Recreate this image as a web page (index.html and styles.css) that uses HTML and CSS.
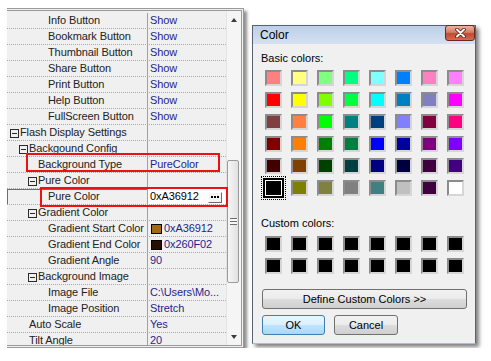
FILE: index.html
```html
<!DOCTYPE html>
<html lang="en">
<head>
  <meta charset="UTF-8">
  <meta name="viewport" content="width=device-width, initial-scale=1.0">
  <title>Flash Display Settings - Color</title>
  <link rel="stylesheet" href="styles.css">
</head>
<body>
  <div class="desk">
    <div class="grid-panel">
      <div class="rows">
        <div class="row"><div class="name l3">Info Button</div><div class="value">Show</div></div>
        <div class="row"><div class="name l3">Bookmark Button</div><div class="value">Show</div></div>
        <div class="row"><div class="name l3">Thumbnail Button</div><div class="value">Show</div></div>
        <div class="row"><div class="name l3">Share Button</div><div class="value">Show</div></div>
        <div class="row"><div class="name l3">Print Button</div><div class="value">Show</div></div>
        <div class="row"><div class="name l3">Help Button</div><div class="value">Show</div></div>
        <div class="row"><div class="name l3">FullScreen Button</div><div class="value">Show</div></div>
        <div class="row"><div class="name c0"><i class="toggle"></i>Flash Display Settings</div><div class="value"></div></div>
        <div class="row"><div class="name c1"><i class="toggle"></i>Backgound Config</div><div class="value"></div></div>
        <div class="row">
          <div class="name l2">Background Type</div><div class="value">PureColor</div>
          <span class="mark mark-type"></span>
        </div>
        <div class="row"><div class="name c2"><i class="toggle"></i>Pure Color</div><div class="value"></div></div>
        <div class="row sel">
          <div class="name l3">Pure Color</div>
          <div class="value">0xA36912
            <span class="dots"><svg width="8" height="2" viewBox="0 0 8 2"><rect x="0" width="2" height="2"/><rect x="3" width="2" height="2"/><rect x="6" width="2" height="2"/></svg></span>
          </div>
          <span class="mark mark-color"></span>
        </div>
        <div class="row"><div class="name c2"><i class="toggle"></i>Gradient Color</div><div class="value"></div></div>
        <div class="row"><div class="name l3">Gradient Start Color</div><div class="value"><span class="chip" style="background:#a36912"></span>0xA36912</div></div>
        <div class="row"><div class="name l3">Gradient End Color</div><div class="value"><span class="chip" style="background:#260f02"></span>0x260F02</div></div>
        <div class="row"><div class="name l3">Gradient Angle</div><div class="value">90</div></div>
        <div class="row"><div class="name c2"><i class="toggle"></i>Background Image</div><div class="value"></div></div>
        <div class="row"><div class="name l3">Image File</div><div class="value">C:\Users\Mo...</div></div>
        <div class="row"><div class="name l3">Image Position</div><div class="value">Stretch</div></div>
        <div class="row"><div class="name l1">Auto Scale</div><div class="value">Yes</div></div>
        <div class="row"><div class="name l1">Tilt Angle</div><div class="value">20</div></div>
      </div>
      <div class="scrollbar">
        <div class="arrow up"></div>
        <div class="thumb"><span class="grip"></span></div>
        <div class="arrow down"></div>
      </div>
    </div>

    <div class="dialog">
      <div class="titlebar">
        <span class="title">Color</span>
        <button class="close">
          <svg width="13" height="10" viewBox="0 0 13 10">
            <path d="M3 1.5L10 8.5M10 1.5L3 8.5" stroke="#5a1d12" stroke-width="3.6" stroke-linecap="round"/>
            <path d="M3 1.5L10 8.5M10 1.5L3 8.5" stroke="#fff" stroke-width="2" stroke-linecap="round"/>
          </svg>
        </button>
      </div>
      <div class="dlg-body">
        <div class="label">Basic colors:</div>
        <div class="swatches">
          <span class="sw" style="background:#ff8080"></span>
          <span class="sw" style="background:#ffff80"></span>
          <span class="sw" style="background:#80ff80"></span>
          <span class="sw" style="background:#00ff80"></span>
          <span class="sw" style="background:#80ffff"></span>
          <span class="sw" style="background:#0080ff"></span>
          <span class="sw" style="background:#ff80c0"></span>
          <span class="sw" style="background:#ff80ff"></span>

          <span class="sw" style="background:#ff0000"></span>
          <span class="sw" style="background:#ffff00"></span>
          <span class="sw" style="background:#80ff00"></span>
          <span class="sw" style="background:#00ff40"></span>
          <span class="sw" style="background:#00ffff"></span>
          <span class="sw" style="background:#0080c0"></span>
          <span class="sw" style="background:#8080c0"></span>
          <span class="sw" style="background:#ff00ff"></span>

          <span class="sw" style="background:#804040"></span>
          <span class="sw" style="background:#ff8040"></span>
          <span class="sw" style="background:#00ff00"></span>
          <span class="sw" style="background:#008080"></span>
          <span class="sw" style="background:#004080"></span>
          <span class="sw" style="background:#8080ff"></span>
          <span class="sw" style="background:#800040"></span>
          <span class="sw" style="background:#ff0080"></span>

          <span class="sw" style="background:#800000"></span>
          <span class="sw" style="background:#ff8000"></span>
          <span class="sw" style="background:#008000"></span>
          <span class="sw" style="background:#008040"></span>
          <span class="sw" style="background:#0000ff"></span>
          <span class="sw" style="background:#0000a0"></span>
          <span class="sw" style="background:#800080"></span>
          <span class="sw" style="background:#8000ff"></span>

          <span class="sw" style="background:#400000"></span>
          <span class="sw" style="background:#804000"></span>
          <span class="sw" style="background:#004000"></span>
          <span class="sw" style="background:#004040"></span>
          <span class="sw" style="background:#000080"></span>
          <span class="sw" style="background:#000040"></span>
          <span class="sw" style="background:#400040"></span>
          <span class="sw" style="background:#400080"></span>

          <span class="sw picked" style="background:#000000"></span>
          <span class="sw" style="background:#808000"></span>
          <span class="sw" style="background:#808040"></span>
          <span class="sw" style="background:#808080"></span>
          <span class="sw" style="background:#408080"></span>
          <span class="sw" style="background:#c0c0c0"></span>
          <span class="sw" style="background:#400040"></span>
          <span class="sw" style="background:#ffffff"></span>
        </div>

        <div class="label custom-label">Custom colors:</div>
        <div class="swatches custom">
          <span class="sw"></span><span class="sw"></span><span class="sw"></span><span class="sw"></span>
          <span class="sw"></span><span class="sw"></span><span class="sw"></span><span class="sw"></span>
          <span class="sw"></span><span class="sw"></span><span class="sw"></span><span class="sw"></span>
          <span class="sw"></span><span class="sw"></span><span class="sw"></span><span class="sw"></span>
        </div>

        <button class="btn btn-define">Define Custom Colors &gt;&gt;</button>
        <div class="btn-row">
          <button class="btn btn-ok">OK</button>
          <button class="btn btn-cancel">Cancel</button>
        </div>
      </div>
    </div>
  </div>
</body>
</html>
```

FILE: styles.css
```css
* {
  box-sizing: border-box;
}
body {
  margin: 0;
  background: #fff;
  font-family: "Liberation Sans", Arial, sans-serif;
  font-size: 11px;
  color: #222;
}
.desk {
  display: flex;
  align-items: flex-start;
  padding: 8px 0 0 7px;
}

/* property grid */
.grid-panel {
  display: flex;
  width: 237px;
  height: 340px;
  background: #f0f0f0;
  border-top: 3px double #9a9a9a;
  border-right: 3px double #9a9a9a;
  border-bottom: 3px double #9a9a9a;
  box-shadow: 3px 3px 3px rgba(0, 0, 0, 0.45);
  overflow: hidden;
}
.rows {
  width: 219px;
  flex: none;
  padding-top: 2px;
  letter-spacing: -0.1px;
}
.row {
  position: relative;
  display: flex;
  height: 16px;
  line-height: 15px;
  border-bottom: 1px dotted #a9a9a9;
}
.name {
  width: 140px;
  flex: none;
  display: flex;
  align-items: center;
  white-space: nowrap;
  overflow: hidden;
}
.value {
  flex: 1;
  display: flex;
  align-items: center;
  padding-left: 2px;
  border-left: 1px solid #a0a0a0;
  color: #1f1f8c;
  white-space: nowrap;
  overflow: hidden;
}
.l1 { padding-left: 22px; }
.l2 { padding-left: 31px; }
.l3 { padding-left: 41px; }
.c0 { padding-left: 3px; }
.c1 { padding-left: 12px; }
.c2 { padding-left: 21px; }
.toggle {
  width: 9px;
  height: 9px;
  margin: 2px 1px 0 0;
  border: 1px solid #2a2a2a;
  background: linear-gradient(#2a2a2a, #2a2a2a) center / 5px 1px no-repeat;
}
.row.sel .name {
  box-shadow: inset 1px 1px 0 #6e6e6e;
}
.row.sel .value {
  background: #fff;
  color: #000;
}
.dots {
  display: flex;
  align-items: center;
  justify-content: center;
  width: 14px;
  height: 11px;
  margin: 1px 4px 0 auto;
  background: #f4f4f4;
  border: 1px solid;
  border-color: #fff #6a6a6a #6a6a6a #fff;
}
.chip {
  width: 11px;
  height: 10px;
  margin: 1px 2px 0 1px;
  border: 1px solid #000;
}
.mark {
  position: absolute;
  z-index: 2;
  border: 2px solid #ee1111;
}
.mark-type {
  left: 19px;
  top: -4px;
  width: 194px;
  height: 19px;
}
.mark-color {
  left: 33px;
  top: -2px;
  width: 188px;
  height: 20px;
}

.scrollbar {
  position: relative;
  z-index: 1;
  width: 15px;
  flex: none;
  display: flex;
  flex-direction: column;
  background: #f5f5f5;
  border-left: 1px solid #e4e4e4;
}
.arrow {
  height: 17px;
  display: flex;
  align-items: center;
  justify-content: center;
}
.arrow::before {
  content: "";
  border-left: 3px solid transparent;
  border-right: 3px solid transparent;
}
.arrow.up::before {
  border-bottom: 4px solid #3a3a3a;
}
.arrow.down {
  margin-top: auto;
}
.arrow.down::before {
  border-top: 4px solid #3a3a3a;
}
.thumb {
  width: 12px;
  height: 123px;
  margin-top: 132px;
  display: flex;
  align-items: center;
  justify-content: center;
  border: 1px solid #9b9b9b;
  border-radius: 2px;
  background: linear-gradient(to right, #f6f6f6, #e1e1e1);
}
.grip {
  width: 7px;
  height: 7px;
  background: repeating-linear-gradient(#6c6c6c 0 1px, #f7f7f7 1px 3px);
}

/* color dialog */
.dialog {
  width: 224px;
  margin: 17px 0 0 8px;
  background: #f0f0f0;
  border: 1px solid #59626e;
  border-bottom-color: #8ccbea;
  box-shadow: 3px 3px 4px rgba(0, 0, 0, 0.5);
}
.titlebar {
  display: flex;
  height: 18px;
  background: linear-gradient(#bccfe8, #d4e1f1);
}
.title {
  padding: 2px 0 0 7px;
  font-size: 12px;
  line-height: 14px;
  color: #000;
}
.close {
  margin-left: auto;
  margin-top: -1px;
  width: 30px;
  height: 16px;
  padding: 0;
  display: flex;
  align-items: center;
  justify-content: center;
  border: 1px solid #6b2a1e;
  border-radius: 3px;
  background: linear-gradient(#eab3a3, #d77c66 45%, #c3492f 55%, #d46c52);
}
.dlg-body {
  padding: 8px 0 8px 8px;
}
.label {
  line-height: 12px;
  color: #000;
}
.custom-label {
  margin-top: 21px;
}
.swatches {
  display: grid;
  grid-template-columns: repeat(8, 17px);
  grid-auto-rows: 16px;
  column-gap: 9px;
  row-gap: 6px;
  margin: 6px 0 0 4px;
}
.swatches.custom {
  margin-top: 7px;
}
.sw {
  border: 2px solid;
  border-color: #8c8c8c #d6d6d6 #d6d6d6 #8c8c8c;
  background: #000;
}
.sw.picked {
  border: 1px solid #fff;
  box-shadow: 0 0 0 2px #000;
  outline: 1px dotted #000;
  outline-offset: 3px;
}
.btn {
  height: 20px;
  padding: 0;
  font-family: "Liberation Sans", Arial, sans-serif;
  font-size: 11px;
  color: #000;
  border: 1px solid #707070;
  border-radius: 3px;
  background: linear-gradient(#f2f2f2 0%, #ebebeb 50%, #dddddd 50%, #cfcfcf 100%);
}
.btn-define {
  display: block;
  width: 205px;
  margin: 15px 0 0 1px;
}
.btn-row {
  display: flex;
  gap: 9px;
  margin: 6px 0 0 1px;
}
.btn-ok {
  width: 63px;
  border-color: #3c7fb1;
  background: linear-gradient(#eaf6fd 0%, #d9f0fc 50%, #bee6fd 50%, #a7d9f5 100%);
}
.btn-cancel {
  width: 64px;
}
```
